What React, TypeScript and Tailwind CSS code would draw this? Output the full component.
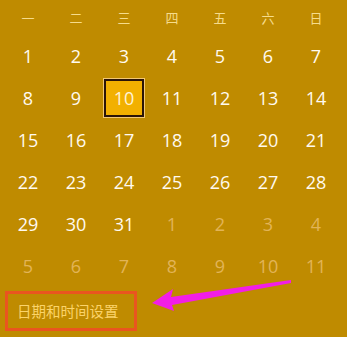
const weekdays = ["一", "二", "三", "四", "五", "六", "日"];

interface DayCell {
    day: number;
    current: boolean;
}

const buildDays = (): DayCell[] => {
    const days: DayCell[] = [];
    for (let d = 1; d <= 31; d++) days.push({ day: d, current: true });
    for (let d = 1; d <= 11; d++) days.push({ day: d, current: false });
    return days;
};

const App: React.FC = () => {
    const days = buildDays();
    const today = 10;

    return (
        <div
            className="relative w-[347px] h-[337px] bg-[#bf8b00] overflow-hidden"
            style={{ fontFamily: '"Open Sans", "Noto Sans", "Noto Sans CJK SC", sans-serif' }}
        >
            {/* Weekday header */}
            <div className="grid grid-cols-7 w-[336px] ml-[4px] h-[35px] items-center">
                {weekdays.map((w) => (
                    <div key={w} className="text-center text-[13px] text-[#f6dc8c]" style={{ fontFamily: '"Noto Sans CJK SC", sans-serif' }}>
                        {w}
                    </div>
                ))}
            </div>

            {/* Days */}
            <div className="grid grid-cols-7 w-[336px] ml-[4px]">
                {days.map((cell, i) => (
                    <div key={i} className="h-[42px] flex items-center justify-center">
                        {cell.current && cell.day === today ? (
                            <div className="w-[42px] h-[40px] border border-[#f3c873] flex">
                                <div className="flex-1 border-2 border-[#2a1408] bg-[#f2b000] flex items-center justify-center text-[18px] text-[#fff3d6]">
                                    {cell.day}
                                </div>
                            </div>
                        ) : (
                            <span className={`text-[18px] ${cell.current ? 'text-[#fffaf0]' : 'text-[#e2b457]'}`}>
                                {cell.day}
                            </span>
                        )}
                    </div>
                ))}
            </div>

            {/* Settings link */}
            <div className="mt-[4px] ml-[5px] w-[132px] h-[40px] border-[3px] border-[#e9551f] flex items-center pl-[9px]">
                <span className="text-[14.5px] text-[#fbd36a]" style={{ fontFamily: '"Noto Sans CJK SC", sans-serif' }}>
                    日期和时间设置
                </span>
            </div>

            {/* Annotation arrow */}
            <svg className="absolute left-0 top-0 pointer-events-none" width="347" height="337" viewBox="0 0 347 337">
                <polygon points="152,303 173,289 171,297 291,280 291,283 172,305 174,311" fill="#f21ee6" />
            </svg>
        </div>
    );
};

export default App;
